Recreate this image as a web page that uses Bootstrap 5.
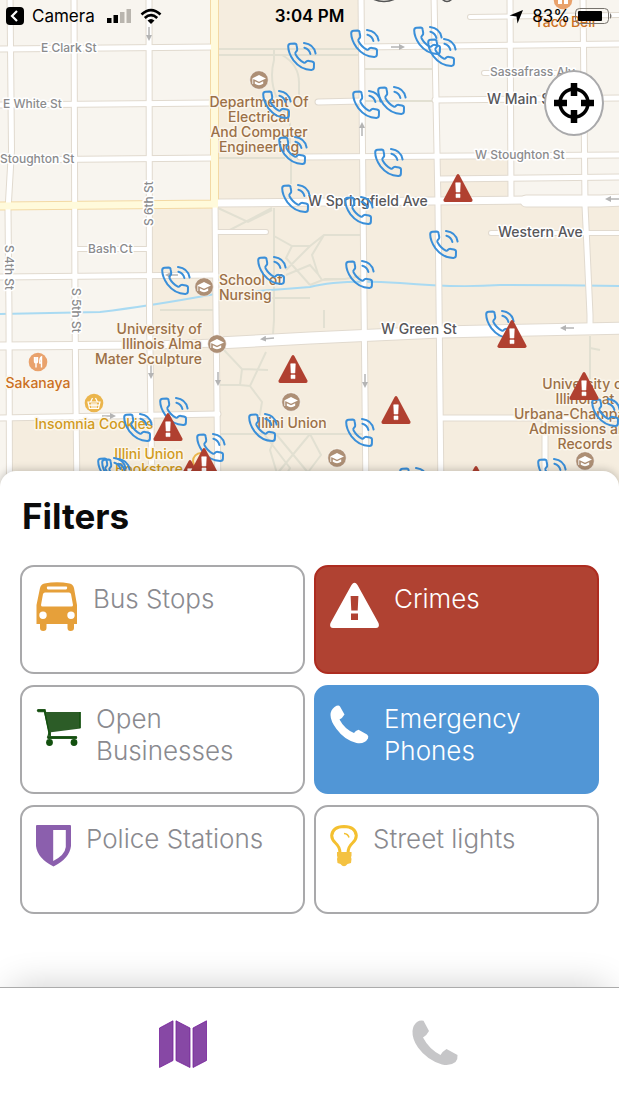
<!DOCTYPE html>
<html lang="en">
<head>
<meta charset="utf-8">
<meta name="viewport" content="width=device-width, initial-scale=1">
<title>Campus Safety Map</title>
<link href="https://cdn.jsdelivr.net/npm/bootstrap@5.3.0/dist/css/bootstrap.min.css" rel="stylesheet">
<style>
  body { font-family: Inter, "Liberation Sans", sans-serif; background: #fff; color: #000; }
  .map-area { height: 490px; background: #f8f5ef; }
  .map-area .map-canvas { width: 100%; height: 100%; }
  .road-case { fill: none; stroke: #e1dacf; stroke-linejoin: round; stroke-linecap: round; }
  .road-fill { fill: none; stroke: #fff; stroke-linejoin: round; stroke-linecap: round; }
  .trail { fill: none; stroke: #e2e0d2; stroke-width: 2; }
  .arrows { fill: none; stroke: #b4b4b4; stroke-width: 1.5; }
  .map-canvas text { font-weight: 500; stroke-width: 3px; stroke-linejoin: round; paint-order: stroke; }
  .street { font-size: 12px; fill: #8b8b8d; stroke: #fff; }
  .street-major { font-size: 14px; fill: #57575a; stroke: #fff; }
  .place { font-size: 14px; fill: #9b7047; stroke: #fbf6ec; }
  .place-food { fill: #cb701f; }
  .place-shop { fill: #d19a20; }
  .status { top: 0; left: 0; right: 0; height: 32px; font-size: 17px; line-height: 20px; padding: 0 6px; }
  .status-side { flex: 1 1 0; }
  .locate { top: 70px; right: 15px; width: 60px; height: 66px; border: 2px solid #a9a9ab; border-radius: 50%; background: #fff; }
  .sheet { margin-top: -19px; padding: 24px 20px 72px; border-radius: 16px 16px 0 0; background: #fff; box-shadow: 0 -1px 8px rgba(0,0,0,.22); }
  .sheet-title { font-size: 35px; line-height: 42px; font-weight: 700; margin: 0 0 28px 2px; color: #0b0b0b; }
  .filter-grid { display: grid; grid-template-columns: 1fr 1fr; gap: 11px 9px; }
  .filter-tile { min-height: 109px; padding: 14px; gap: 15px; border: 2px solid #a9a9ab; border-radius: 14px; background: #fff; color: #8a8a8f; font-size: 26px; line-height: 32px; font-weight: 300; }
  .filter-tile svg { flex: none; }
  .filter-tile span { padding-top: 2px; }
  .tile-crime { background: #b04232; border-color: #ad2c20; color: #fff; }
  .tile-phone { background: #5196d6; border-color: #5196d6; color: #fff; }
  .tab-bar { min-height: 113px; padding: 0 56px; border-top: 1px solid #ababab; background: #fff; box-shadow: 0 -12px 36px -12px rgba(0,0,0,.2); }
</style>
</head>
<body class="d-flex flex-column min-vh-100">

<main class="d-flex flex-column flex-grow-1">
  <section class="map-area position-relative overflow-hidden" aria-label="Map">
    <svg class="map-canvas d-block" viewBox="0 0 619 490" preserveAspectRatio="xMidYMid slice">
      <defs>
        <symbol id="pin-phone" viewBox="0 0 30 30" overflow="visible">
          <g fill="none" stroke="#3a8fd9" stroke-width="2" stroke-linejoin="round" stroke-linecap="round">
            <path d="M1.200 4.200Q1.200 1.800 3.600 1.700L7.600 1.500Q9.400 1.500 9.600 3.400L10.200 7Q10.400 8.600 9.200 9.600Q7.900 10.800 8.500 12.200Q11.500 17.800 16.800 20.600Q18 21.100 18.800 20Q20 18.600 21.800 18.900L25 19.400Q27 19.800 27 21.600L26.900 25.600Q26.800 27.800 24.400 27.900Q14 28 6.500 18.400Q1.200 10.800 1.200 4.200Z"/>
            <path d="M17 1Q27 2.200 28.600 11.500M17.400 5.800Q22.200 7 23.400 12"/>
          </g>
        </symbol>
        <symbol id="pin-crime" viewBox="0 0 30 28" overflow="visible">
          <path d="M13.600 1Q15 -.800 16.400 1L29.400 25.400Q30 27.800 27.800 28H2.200Q0 27.800 .600 25.400Z" fill="#b04030"/>
          <path d="M12.700 8.800H17.300L16.900 18H13.100ZM13 20H17V23.600H13Z" fill="#fff" stroke="#fff" stroke-width=".600"/>
        </symbol>
        <symbol id="poi-school" viewBox="-10 -10 20 20" overflow="visible">
          <circle r="9.300" fill="#ad8f75" stroke="#fff" stroke-width=".600"/>
          <path d="M-7 -1.600L0 -5L7 -1.600L0 1.800ZM-4.200 1.200L0 3.200L4.200 1.200V3.800Q0 6.600 -4.200 3.800ZM-6.600 -1H-5.800V4H-6.600Z" fill="#fff"/>
        </symbol>
        <marker id="tip" viewBox="0 0 6 6" refX="3" refY="3" markerWidth="4" markerHeight="4" orient="auto"><path d="M0 0L6 3L0 6Z" fill="#b4b4b4"/></marker>
        <g id="minor-roads">
          <path d="M10 -5L11.500 150L8 210L9 315L9.500 495M74 -5L75 315L77 495M149 -5L149.500 315L152 495M215 200L216 315L218 495M361 -5L363 200L366 495M434 -5L438 205L441 495M510 -5L511 198M583 -5L585 205L590 315V330M545 418V495"/>
          <path d="M-5 49L214 47M362 47L625 44M-5 105L214 103M318 102L362 101M435 100L625 98M-5 160L214 158M300 157L625 155M438 179L625 177M-5 277L216 275M-5 418L218 414M441 418H625"/>
        </g>
        <g id="lanes"><path d="M470 17L625 15M484 73H560M218 232H266M75 249H149M491 233H625"/></g>
      </defs>

      <path d="M215 0H362V157H510V203H619V490H10V419H150V205H215Z" fill="#f5eddf"/>
      <g class="trail">
        <path d="M218 49H362M218 55H362M365 69H434M365 101H434M274 49V60Q266 90 290 120V158M282 55Q300 65 299 85V100M218 158H285M291 158V184M218 208L248 222L272 210M226 232L272 208M274 208V320L273 334M274 236L292 246H310L324 235H362M292 246L286 258L310 285M310 246L286 270M310 285L325 279H345L362 276M286 275L310 265L318 274L322 280L345 279M324 235L312 255L318 274M218 298H310M324 310V328M218 310H160"/>
        <path d="M224 350L242 369L240 385H220M242 369L268 370M240 385L250 386L266 352M250 386L262 402L258 426L290 468L278 490M218 434H362M276 434L310 475M310 434L276 475M276 434L270 450L282 490M310 434L321 455L306 475M590 336V400M590 348L600 350"/>
      </g>
      <path d="M0 314L100 312Q150 306 215 294Q260 291 310 287Q340 279 400 283Q455 288 500 285Q560 285 619 286" fill="none" stroke="#a9daf2" stroke-width="2"/>

      <use href="#lanes" class="road-case" stroke-width="6"/>
      <use href="#minor-roads" class="road-case" stroke-width="7"/>
      <path class="road-case" stroke-width="9" d="M218 203L526 200M-5 346L150 345L218 343"/>
      <path class="road-case" stroke-width="13" d="M526 201H600L625 200M218 343L310 338L440 332L625 328"/>
      <path d="M214.500 -5V204M-5 206L218 204" fill="none" stroke="#f3d9a4" stroke-width="9"/>
      <use href="#lanes" class="road-fill" stroke-width="4"/>
      <use href="#minor-roads" class="road-fill" stroke-width="5"/>
      <path class="road-fill" stroke-width="7" d="M218 203L526 200M-5 346L150 345L218 343"/>
      <path class="road-fill" stroke-width="11" d="M526 201H600L625 200M218 343L310 338L440 332L625 328"/>
      <path d="M214.500 -5V204M-5 206L218 204" fill="none" stroke="#fffadb" stroke-width="7"/>

      <g class="arrows">
        <path marker-end="url(#tip)" d="M149 27V38"/><path marker-end="url(#tip)" d="M391 47H402"/><path marker-end="url(#tip)" d="M362 136V125"/>
        <path marker-end="url(#tip)" d="M619 199H608"/><path marker-end="url(#tip)" d="M178 275H168"/><path marker-end="url(#tip)" d="M274 338L263 339"/>
        <path marker-end="url(#tip)" d="M574 328H563"/><path marker-end="url(#tip)" d="M151 365V376"/><path marker-end="url(#tip)" d="M218 372V383"/>
        <path marker-end="url(#tip)" d="M365 374V385"/><path marker-end="url(#tip)" d="M102 416H113"/>
      </g>

      <g class="street">
        <text x="41" y="52">E Clark St</text>
        <text x="3" y="108">E White St</text>
        <text x="0" y="163">Stoughton St</text>
        <text x="88" y="253">Bash Ct</text>
        <text x="490" y="76">Sassafrass Aly</text>
        <text x="475" y="159">W Stoughton St</text>
        <text transform="translate(153 226) rotate(-90)">S 6th St</text>
        <text transform="translate(5 245) rotate(90)">S 4th St</text>
        <text transform="translate(72 288) rotate(90)">S 5th St</text>
      </g>
      <g class="street-major">
        <text x="487" y="104">W Main St</text>
        <text x="308" y="206">W Springfield Ave</text>
        <text x="498" y="237">Western Ave</text>
        <text x="381" y="334">W Green St</text>
      </g>

      <use href="#poi-school" x="249" y="70" width="20" height="20"/>
      <use href="#poi-school" x="194" y="277" width="20" height="20"/>
      <use href="#poi-school" x="207" y="334" width="20" height="20"/>
      <use href="#poi-school" x="281" y="392" width="20" height="20"/>
      <use href="#poi-school" x="327" y="448" width="20" height="20"/>
      <use href="#poi-school" x="575" y="451" width="20" height="20"/>
      <g transform="translate(38 362)">
        <circle r="9.300" fill="#e9a26c"/>
        <path d="M-3.500 -5V-1Q-3.500 1 -2 1V5.500M-.500 -5V-1Q-.500 1 -2 1V-5M3.500 5.500V-5Q1.500 -4 1.800 1H3.500" fill="none" stroke="#fff" stroke-width="1.400"/>
      </g>
      <g transform="translate(94 403)">
        <circle r="9.300" fill="#ebb54c"/>
        <path d="M-6 -1H6L4.500 5.500H-4.500ZM-3.500 -1L-1.500 -5M3.500 -1L1.500 -5M-2 0V5M0 0V5M2 0V5M-5 2.200H5" fill="none" stroke="#fff" stroke-width="1.200"/>
      </g>
      <g transform="translate(563 0)">
        <circle r="9.300" fill="#e9a26c"/>
        <path d="M-5 -1H-1V4H-5ZM1 -3H5V4H1Z" fill="#fff"/>
      </g>
      <circle cx="201" cy="461" r="8" fill="#fbf1d8" stroke="#ebb54c" stroke-width="2"/>
      <path d="M373 -1Q384 4 395 -1M442 -1Q447 4 452 -1" fill="none" stroke="#555" stroke-width="1.500"/>

      <g class="place" text-anchor="middle">
        <text x="259" y="107">Department Of</text>
        <text x="259" y="122">Electrical</text>
        <text x="259" y="137">And Computer</text>
        <text x="259" y="152">Engineering</text>
        <text x="292" y="428">Illini Union</text>
        <text x="585" y="389">University of</text>
        <text x="585" y="404">Illinois at</text>
        <text x="580" y="419">Urbana-Champaign</text>
        <text x="582" y="434">Admissions and</text>
        <text x="585" y="449">Records</text>
      </g>
      <g class="place">
        <text x="219" y="285">School of</text>
        <text x="219" y="300">Nursing</text>
      </g>
      <g class="place" text-anchor="end">
        <text x="202" y="334">University of</text>
        <text x="202" y="349">Illinois Alma</text>
        <text x="202" y="364">Mater Sculpture</text>
      </g>
      <g text-anchor="middle">
        <text class="place place-food" x="38" y="388">Sakanaya</text>
        <text class="place place-food" x="565" y="27">Taco Bell</text>
        <text class="place place-shop" x="94" y="429">Insomnia Cookies</text>
        <text class="place place-shop" x="149" y="459">Illini Union</text>
        <text class="place place-shop" x="149" y="474">Bookstore</text>
      </g>

      <g id="phones"></g>
      <g id="crimes"></g>
    </svg>

    <header class="status position-absolute d-flex align-items-center">
      <div class="status-side d-flex align-items-center">
        <svg width="18" height="18" viewBox="0 0 18 18" aria-hidden="true"><rect width="18" height="18" rx="4"/><path d="M11 4L6 9L11 14" fill="none" stroke="#fff" stroke-width="2.200"/></svg>
        <span class="ms-2">Camera</span>
        <svg class="ms-2 ps-1" width="29" height="16" viewBox="0 0 25 16" aria-label="Signal"><path d="M0 10H4.500V15H0ZM6.500 7H11V15H6.500Z"/><path d="M13 4H17.500V15H13ZM19.500 1H24V15H19.500Z" fill="#b9b5ae"/></svg>
        <svg class="ms-2" width="22" height="17" viewBox="0 0 22 17" aria-label="Wi-Fi"><g fill="none" stroke="#000" stroke-width="2.600"><path d="M1.500 6.500Q11 -2.300 20.500 6.500M4.800 10Q11 4.200 17.200 10"/></g><path d="M7.500 12.500Q11 9.500 14.500 12.500L11 16Z"/></svg>
      </div>
      <div class="fw-semibold">3:04 PM</div>
      <div class="status-side d-flex align-items-center justify-content-end">
        <svg class="me-2" width="15" height="15" viewBox="0 0 15 15" aria-hidden="true"><path d="M14 1L8.500 14.500L7.500 7.500L.500 6.500Z"/></svg>
        <span>83%</span>
        <svg class="ms-1" width="39" height="16" viewBox="0 0 39 16" aria-label="Battery"><rect x="1.500" y=".500" width="33" height="15" rx="4" fill="none" stroke="#77736d"/><rect x="4" y="3" width="24" height="10" rx="1"/><path d="M36 5Q39 8 36 11Z" fill="#77736d"/></svg>
      </div>
    </header>

    <button type="button" class="locate position-absolute d-flex align-items-center justify-content-center p-0" aria-label="Center on my location">
      <svg width="40" height="42" viewBox="0 0 40 42"><circle cx="20" cy="21" r="14" fill="none" stroke="#000" stroke-width="3.500"/><path d="M20 1V14M20 28V41M0 21H13M27 21H40" stroke="#000" stroke-width="6.500"/></svg>
    </button>
  </section>

  <section class="sheet position-relative flex-grow-1">
    <h1 class="sheet-title">Filters</h1>
    <div class="filter-grid">
      <button type="button" class="filter-tile d-flex align-items-start text-start" aria-pressed="false">
        <svg width="42" height="50" viewBox="0 0 42 50"><path fill="#e6a03a" fill-rule="evenodd" d="M4 7Q5 3.500 8.500 2.600Q21 -.300 33.500 2.600Q37 3.500 38 7L41 24V43H38V47Q38 50 34.500 50Q31.500 50 31.500 47V43H10.500V47Q10.500 50 7.200 50Q4 50 4 47V43H.500V24ZM11 5.800Q10.500 8.400 12 8.400H30Q31.500 8.400 31 5.800Q30.500 5.500 30 5.500H12ZM9 11.500Q7.500 11.500 7 13L5 24Q5 25.500 6.500 25.500H35.500Q37 25.500 37 24L35 13Q34.500 11.500 33 11.500ZM7 30.500A3.700 3.700 0 1 0 7 37.900A3.700 3.700 0 1 0 7 30.500ZM35 30.500A3.700 3.700 0 1 0 35 37.900A3.700 3.700 0 1 0 35 30.500Z"/></svg>
        <span>Bus Stops</span>
      </button>
      <button type="button" class="filter-tile tile-crime d-flex align-items-start text-start" aria-pressed="true">
        <svg width="49" height="48" viewBox="0 0 49 48"><path fill="#fff" fill-rule="evenodd" d="M21.500 4Q24.500 -.500 27.500 4L48.500 42Q50 46.500 46 47H3Q-1 46.500 .500 42ZM20.600 15L21.300 29.500H27.700L28.400 15ZM21 32.500V39H28V32.500Z"/></svg>
        <span>Crimes</span>
      </button>
      <button type="button" class="filter-tile d-flex align-items-start text-start" aria-pressed="false">
        <svg width="45" height="46" viewBox="0 0 45 46"><path fill="#2c5c27" d="M2 8H9.500L10.200 11H44.500V27.500L15 31.300V35H40.500Q42 36.500 40.500 38H12Q10 36.500 11.500 34.700L12.500 31L8 11.200H2Q-.500 9.600 2 8Z"/><g fill="#12500e"><circle cx="13.500" cy="41.500" r="3.400"/><circle cx="38" cy="41.500" r="3.400"/></g><path d="M1.500 9.500H8.500L13.500 34M12 36.500H40.500M44 11V27" fill="none" stroke="#12500e" stroke-width="1.500"/></svg>
        <span>Open Businesses</span>
      </button>
      <button type="button" class="filter-tile tile-phone d-flex align-items-start text-start" aria-pressed="true">
        <svg width="39" height="46" viewBox="0 0 38 46"><path fill="#fff" d="M4 6Q8 3.500 9.500 5.500L14 13.500Q12 17 9 18.500Q14 28 23.500 32Q25 29.500 28 28.800L36.500 33.500Q38.500 35 37.500 37.500Q34 43.500 26 42Q14 39 6 28Q0 20 0 14Q0 9 4 6Z"/></svg>
        <span>Emergency Phones</span>
      </button>
      <button type="button" class="filter-tile d-flex align-items-start text-start" aria-pressed="false">
        <svg width="35" height="46" viewBox="0 0 35 46"><path fill="#8b5fad" fill-rule="evenodd" d="M1 4H34Q35 4 35 5V25Q33.500 37.500 17.500 45.500Q1.500 37.500 0 25V5Q0 4 1 4ZM17.200 9V40Q29 34 29.800 26V9Z"/></svg>
        <span>Police Stations</span>
      </button>
      <button type="button" class="filter-tile d-flex align-items-start text-start" aria-pressed="false">
        <svg width="28" height="46" viewBox="0 0 28 46"><path d="M10 32Q10 26 5.500 22Q1.700 18.500 1.700 14.500Q2.500 5.700 14 5.500Q25.500 5.700 26.300 14.500Q26.300 18.500 22.500 22Q18 26 18 32" fill="none" stroke="#f4c030" stroke-width="3"/><path d="M14 12.500Q18 12.800 19 16.500" fill="none" stroke="#f4c030" stroke-width="1.600"/><path fill="#f4c242" d="M7 31H21.500V35L21 36L21.500 38L21 42L17.500 43Q14 47.500 10.500 43L7.500 42L7 38L7.500 36L7 35Z"/></svg>
        <span>Street lights</span>
      </button>
    </div>
  </section>
</main>

<nav class="tab-bar position-relative d-flex" aria-label="Main">
  <a href="#" class="flex-fill d-flex align-items-center justify-content-center" aria-label="Map" aria-current="page">
    <svg width="48" height="48" viewBox="0 0 48 48"><path fill="#8748a5" stroke="#75219a" stroke-width=".800" d="M.500 8L14 .800V40.500L.500 47.500ZM17 .800L31 8V47.500L17 40.500ZM34 8L47.500 .800V40.500L34 47.500Z"/></svg>
  </a>
  <a href="#" class="flex-fill d-flex align-items-center justify-content-center" aria-label="Call">
    <svg width="48" height="48" viewBox="0 0 48 48"><path fill="#c6c6c8" d="M5 2Q8 0 11.500 .800L17 11Q15 15 11 17.500Q17 29 28.500 35Q31 31 34.500 29L45.500 35Q46 39 43.500 42Q38 46.500 30 44.500Q15 40 6 27.500Q0 19 .500 11Q1 5 5 2Z"/></svg>
  </a>
</nav>

<script src="https://cdn.jsdelivr.net/npm/bootstrap@5.3.0/dist/js/bootstrap.bundle.min.js"></script>
<script>
  // Marker positions on the map canvas (top-left corner of each pin)
  const phones = [[287,42],[262,90],[278,136],[350,29],[413,26],[427,38],[352,90],[377,86],[374,148],[281,184],
    [161,266],[257,256],[344,196],[429,230],[345,260],[485,310],[159,397],[123,413],[196,433],[97,457],[101,458],
    [248,413],[345,418],[399,467],[537,458],[591,398]];
  const crimes = [[443,174],[278,355],[153,413],[175,460],[189,448],[497,320],[381,396],[569,372],[461,466]];
  const place = (list, symbol, w, h, layer) => {
    for (const [x, y] of list) {
      const pin = document.createElementNS('http://www.w3.org/2000/svg', 'use');
      Object.entries({ href: symbol, x, y, width: w, height: h }).forEach(([k, v]) => pin.setAttribute(k, v));
      document.getElementById(layer).append(pin);
    }
  };
  place(phones, '#pin-phone', 30, 30, 'phones');
  place(crimes, '#pin-crime', 30, 28, 'crimes');
</script>
</body>
</html>
